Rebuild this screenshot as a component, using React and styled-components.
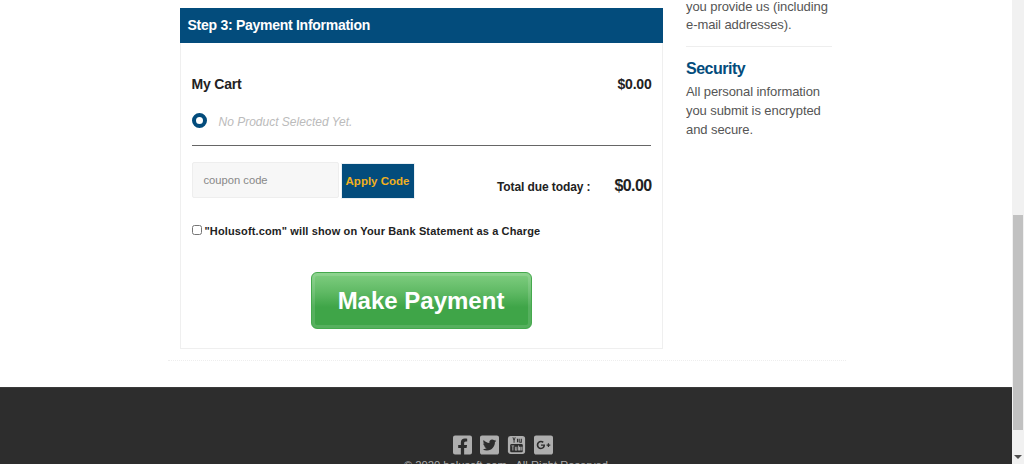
import styled, { createGlobalStyle } from "styled-components";
import {
  FaFacebookSquare,
  FaTwitterSquare,
  FaGooglePlusSquare,
} from "react-icons/fa";

const GlobalStyle = createGlobalStyle`
  html, body {
    margin: 0;
    padding: 0;
    height: 464px;
    overflow: hidden;
    background: #fff;
    font-family: "Liberation Sans", Arial, sans-serif;
  }
`;

const Screen = styled.div`
  display: flex;
  width: 1024px;
  height: 464px;
  overflow: hidden;
`;

const Page = styled.div`
  flex: 1;
  display: flex;
  flex-direction: column;
  min-width: 0;
`;

const Content = styled.div`
  height: 387px;
  flex: none;
  display: flex;
  flex-direction: column;
  align-items: center;
`;

const Container = styled.div`
  box-sizing: border-box;
  width: 678px;
  height: 361px;
  margin-left: 1px;
  padding: 8px 12px 0;
  display: flex;
  gap: 23px;
  border-bottom: 1px dotted #eeeeee;
`;

const Panel = styled.section`
  width: 483px;
  flex: none;
`;

const PanelHeader = styled.h2`
  margin: 0;
  height: 35px;
  line-height: 35px;
  padding-left: 8px;
  background: #034c7c;
  color: #fff;
  font-size: 14px;
  letter-spacing: -0.27px;
  font-weight: 700;
`;

const PanelBody = styled.div`
  box-sizing: border-box;
  height: 306px;
  padding: 31px 11px 0 11px;
  border: 1px solid #efefef;
  border-top: 0;
`;

const CartRow = styled.div`
  display: flex;
  justify-content: space-between;
  align-items: center;
  height: 20px;
  margin-right: -1px;
  font-size: 14px;
  letter-spacing: -0.2px;
  font-weight: 700;
  color: #222;
`;

const ProductRow = styled.div`
  display: flex;
  align-items: center;
  gap: 12px;
  height: 28px;
  margin-top: 14px;
  padding-bottom: 9px;
  border-bottom: 1px solid #666;
`;

const RadioDot = styled.span`
  box-sizing: border-box;
  width: 15px;
  height: 15px;
  margin-bottom: 3px;
  border-radius: 50%;
  background: #fff;
  border: 4.5px solid #034c7c;
`;

const EmptyText = styled.span`
  font-size: 12px;
  font-style: italic;
  color: #bbb;
`;

const CouponRow = styled.div`
  display: flex;
  align-items: center;
  margin: 16px -1px 0 0;
  height: 37px;
`;

const CouponInput = styled.div`
  box-sizing: border-box;
  align-self: flex-start;
  width: 147px;
  height: 36px;
  line-height: 34px;
  padding-left: 11px;
  background: #f7f7f7;
  border: 1px solid #eeeeee;
  border-radius: 2px;
  font-size: 11.2px;
  color: #888;
`;

const ApplyButton = styled.button`
  box-sizing: border-box;
  align-self: flex-start;
  width: 74px;
  height: 36px;
  margin: 1px 0 0 2px;
  padding: 0;
  background: #034c7c;
  border: 1px solid #eaf0f4;
  color: #f0b020;
  font-family: inherit;
  font-size: 11.5px;
  font-weight: 700;
`;

const TotalLabel = styled.span`
  margin: 12px 0 0 auto;
  font-size: 12px;
  letter-spacing: -0.1px;
  font-weight: 700;
  color: #222;
`;

const TotalValue = styled.span`
  margin: 10px 0 0 24px;
  font-size: 16px;
  letter-spacing: -0.6px;
  font-weight: 700;
  color: #222;
`;

const ConsentRow = styled.label`
  display: flex;
  align-items: center;
  gap: 3px;
  margin-top: 26px;
  font-size: 11px;
  font-weight: 700;
  letter-spacing: 0.135px;
  color: #222;
`;

const Checkbox = styled.input`
  width: 10px;
  height: 10px;
  margin: 0 0 2px 0;
`;

const PayWrap = styled.div`
  display: flex;
  justify-content: center;
  margin-top: 35px;
`;

const PayButton = styled.button`
  box-sizing: border-box;
  width: 221px;
  height: 57px;
  border: 1px solid #45a94d;
  border-radius: 6px;
  background: linear-gradient(#80ce81 0%, #5fb964 35%, #3fa548 62%, #3fa548 100%);
  box-shadow: inset 0 0 0 3px rgba(255, 255, 255, 0.12);
  color: #fff;
  font-family: inherit;
  font-size: 24px;
  font-weight: 700;
`;

const Sidebar = styled.aside`
  width: 146px;
  flex: none;
  margin: -10.5px 0 0 0.5px;
`;

const SideText = styled.p`
  margin: 0;
  font-size: 13px;
  letter-spacing: -0.08px;
  line-height: 18.7px;
  color: #555;
`;

const SideDivider = styled.hr`
  margin: 11.5px 0 12px;
  border: 0;
  border-top: 1px solid #eeeeee;
`;

const SideTitle = styled.h3`
  margin: 0 0 4px;
  font-size: 16px;
  letter-spacing: -0.5px;
  line-height: 20px;
  font-weight: 700;
  color: #034c7c;
`;

const Footer = styled.footer`
  flex: 1;
  background: #2d2d2d;
  border-top: 1px solid #3a3a3a;
  display: flex;
  flex-direction: column;
  align-items: center;
  padding-top: 46px;
  overflow: hidden;
`;

const SocialRow = styled.div`
  display: flex;
  gap: 8px;
  height: 21px;
  color: #aeaeae;
  margin-right: 6px;

  svg {
    display: block;
    width: 19px;
    height: 22px;
  }
`;

const Copyright = styled.div`
  margin-top: 3px;
  font-size: 11.2px;
  line-height: 14px;
  color: #aaa;
  white-space: nowrap;
`;

const ScrollTrack = styled.div`
  box-sizing: border-box;
  width: 12px;
  flex: none;
  display: flex;
  flex-direction: column;
  align-items: center;
  padding-top: 215px;
  background: #f1f1f1;
`;

const ScrollThumb = styled.div`
  width: 10px;
  height: 215px;
  background: #c1c1c1;
`;

const ScrollArrow = styled.span`
  margin-top: 25px;
  width: 0;
  height: 0;
  border-left: 4px solid transparent;
  border-right: 4px solid transparent;
  border-top: 4px solid #505050;
`;

// old font-awesome youtube square, the package only has the new one
const YoutubeIcon = () => (
  <svg viewBox="0 0 21 22" fill="currentColor">
    <path d="M4 1h13a3 3 0 0 1 3 3v14a3 3 0 0 1-3 3H4a3 3 0 0 1-3-3V4a3 3 0 0 1 3-3z" />
    <path
      fill="#2d2d2d"
      d="M6 2.5h1l.8 2.2.8-2.2h1L8.3 6v2.4h-1V6zM11 4h1.6v4H11zM13.6 4h1v3.3h.8V4h1v4.4h-2.8z"
    />
    <rect x="3.5" y="10" width="14" height="9" rx="1.5" fill="#2d2d2d" />
    <path d="M5 11.5h3v1H7V17H6v-4.5H5zM8.7 13h1v3.2h.7V13h1v4h-2.7zM12.3 11.5h1V13h1.7v4h-2.7zM15.8 13h1.2v4h-1.2z" />
  </svg>
);

const App = () => (
  <Screen>
    <GlobalStyle />
    <Page>
      <Content>
        <Container>
          <Panel>
            <PanelHeader>Step 3: Payment Information</PanelHeader>
            <PanelBody>
              <CartRow>
                <span>My Cart</span>
                <span>$0.00</span>
              </CartRow>
              <ProductRow>
                <RadioDot />
                <EmptyText>No Product Selected Yet.</EmptyText>
              </ProductRow>
              <CouponRow>
                <CouponInput>coupon code</CouponInput>
                <ApplyButton type="button">Apply Code</ApplyButton>
                <TotalLabel>Total due today :</TotalLabel>
                <TotalValue>$0.00</TotalValue>
              </CouponRow>
              <ConsentRow>
                <Checkbox type="checkbox" />
                "Holusoft.com" will show on Your Bank Statement as a Charge
              </ConsentRow>
              <PayWrap>
                <PayButton type="button">Make Payment</PayButton>
              </PayWrap>
            </PanelBody>
          </Panel>
          <Sidebar>
            <SideText>
              you provide us (including
              <br />
              e-mail addresses).
            </SideText>
            <SideDivider />
            <SideTitle>Security</SideTitle>
            <SideText>
              All personal information you submit is encrypted and secure.
            </SideText>
          </Sidebar>
        </Container>
      </Content>
      <Footer>
        <SocialRow>
          <FaFacebookSquare />
          <FaTwitterSquare />
          <YoutubeIcon />
          <FaGooglePlusSquare />
        </SocialRow>
        <Copyright>© 2020 holusoft.com . All Right Reserved</Copyright>
      </Footer>
    </Page>
    <ScrollTrack>
      <ScrollThumb />
      <ScrollArrow />
    </ScrollTrack>
  </Screen>
);

export default App;
